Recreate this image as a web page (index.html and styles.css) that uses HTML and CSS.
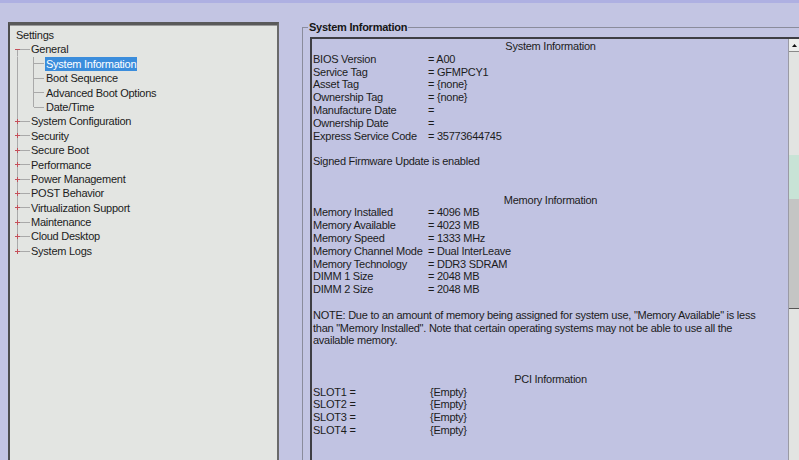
FILE: index.html
```html
<!DOCTYPE html>
<html lang="en">
<head>
  <meta charset="UTF-8">
  <meta name="viewport" content="width=device-width, initial-scale=1.0">
  <title>Settings</title>
  <link rel="stylesheet" href="styles.css">
</head>
<body>
  <div class="strip"></div>
  <div class="page">
    <div class="tree">
      <div class="node root"><span class="label">Settings</span></div>
      <div class="node top first">
        <span class="twig"><svg width="5" height="5" viewBox="0 0 5 5"><path d="M0 2.5H5" stroke="#c4505a" stroke-width="1"/></svg></span>
        <span class="label">General</span>
      </div>
      <div class="node child"><span class="twig"></span><span class="label selected">System Information</span></div>
      <div class="node child"><span class="twig"></span><span class="label">Boot Sequence</span></div>
      <div class="node child"><span class="twig"></span><span class="label">Advanced Boot Options</span></div>
      <div class="node child end"><span class="twig"></span><span class="label">Date/Time</span></div>
      <div class="node top"><span class="twig"><svg width="5" height="5" viewBox="0 0 5 5"><path d="M0 2.5H5M2.5 0V5" stroke="#c4505a" stroke-width="1"/></svg></span><span class="label">System Configuration</span></div>
      <div class="node top"><span class="twig"><svg width="5" height="5" viewBox="0 0 5 5"><path d="M0 2.5H5M2.5 0V5" stroke="#c4505a" stroke-width="1"/></svg></span><span class="label">Security</span></div>
      <div class="node top"><span class="twig"><svg width="5" height="5" viewBox="0 0 5 5"><path d="M0 2.5H5M2.5 0V5" stroke="#c4505a" stroke-width="1"/></svg></span><span class="label">Secure Boot</span></div>
      <div class="node top"><span class="twig"><svg width="5" height="5" viewBox="0 0 5 5"><path d="M0 2.5H5M2.5 0V5" stroke="#c4505a" stroke-width="1"/></svg></span><span class="label">Performance</span></div>
      <div class="node top"><span class="twig"><svg width="5" height="5" viewBox="0 0 5 5"><path d="M0 2.5H5M2.5 0V5" stroke="#c4505a" stroke-width="1"/></svg></span><span class="label">Power Management</span></div>
      <div class="node top"><span class="twig"><svg width="5" height="5" viewBox="0 0 5 5"><path d="M0 2.5H5M2.5 0V5" stroke="#c4505a" stroke-width="1"/></svg></span><span class="label">POST Behavior</span></div>
      <div class="node top"><span class="twig"><svg width="5" height="5" viewBox="0 0 5 5"><path d="M0 2.5H5M2.5 0V5" stroke="#c4505a" stroke-width="1"/></svg></span><span class="label">Virtualization Support</span></div>
      <div class="node top"><span class="twig"><svg width="5" height="5" viewBox="0 0 5 5"><path d="M0 2.5H5M2.5 0V5" stroke="#c4505a" stroke-width="1"/></svg></span><span class="label">Maintenance</span></div>
      <div class="node top"><span class="twig"><svg width="5" height="5" viewBox="0 0 5 5"><path d="M0 2.5H5M2.5 0V5" stroke="#c4505a" stroke-width="1"/></svg></span><span class="label">Cloud Desktop</span></div>
      <div class="node top last"><span class="twig"><svg width="5" height="5" viewBox="0 0 5 5"><path d="M0 2.5H5M2.5 0V5" stroke="#c4505a" stroke-width="1"/></svg></span><span class="label">System Logs</span></div>
    </div>

    <fieldset class="group">
      <legend>System Information</legend>
      <div class="frame">
        <div class="info">
          <div class="heading">System Information</div>
          <div class="pair"><span class="key">BIOS Version</span><span>= A00</span></div>
          <div class="pair"><span class="key">Service Tag</span><span>= GFMPCY1</span></div>
          <div class="pair"><span class="key">Asset Tag</span><span>= {none}</span></div>
          <div class="pair"><span class="key">Ownership Tag</span><span>= {none}</span></div>
          <div class="pair"><span class="key">Manufacture Date</span><span>=</span></div>
          <div class="pair"><span class="key">Ownership Date</span><span>=</span></div>
          <div class="pair"><span class="key">Express Service Code</span><span>= 35773644745</span></div>
          <div class="blank"></div>
          <div>Signed Firmware Update is enabled</div>
          <div class="blank"></div>
          <div class="blank"></div>
          <div class="heading">Memory Information</div>
          <div class="pair"><span class="key">Memory Installed</span><span>= 4096 MB</span></div>
          <div class="pair"><span class="key">Memory Available</span><span>= 4023 MB</span></div>
          <div class="pair"><span class="key">Memory Speed</span><span>= 1333 MHz</span></div>
          <div class="pair"><span class="key">Memory Channel Mode</span><span>= Dual InterLeave</span></div>
          <div class="pair"><span class="key">Memory Technology</span><span>= DDR3 SDRAM</span></div>
          <div class="pair"><span class="key">DIMM 1 Size</span><span>= 2048 MB</span></div>
          <div class="pair"><span class="key">DIMM 2 Size</span><span>= 2048 MB</span></div>
          <div class="blank"></div>
          <div>NOTE: Due to an amount of memory being assigned for system use, "Memory Available" is less<br>than "Memory Installed". Note that certain operating systems may not be able to use all the<br>available memory.</div>
          <div class="blank"></div>
          <div class="blank"></div>
          <div class="heading">PCI Information</div>
          <div class="pair slot"><span class="key">SLOT1 =</span><span>{Empty}</span></div>
          <div class="pair slot"><span class="key">SLOT2 =</span><span>{Empty}</span></div>
          <div class="pair slot"><span class="key">SLOT3 =</span><span>{Empty}</span></div>
          <div class="pair slot"><span class="key">SLOT4 =</span><span>{Empty}</span></div>
        </div>
        <div class="scrollbar">
          <div class="arrow"><svg width="5" height="3" viewBox="0 0 5 3"><path d="M0 3L2.5 0L5 3Z" fill="#111"/></svg></div>
          <div class="thumb"></div>
        </div>
      </div>
    </fieldset>
  </div>
</body>
</html>
```

FILE: styles.css
```css
html, body {
  margin: 0;
  height: 100%;
  overflow: hidden;
}
body {
  background: #c3c5e3;
  font-family: "Liberation Sans", Arial, sans-serif;
  font-size: 11px;
  letter-spacing: -0.25px;
  color: #1c1c1c;
}
.strip {
  height: 3px;
  background: #aeb0e2;
}
.page {
  display: flex;
  align-items: flex-start;
}

/* left navigation tree */
.tree {
  margin: 19px 0 0 8px;
  width: 267px;
  height: 432px;
  padding-top: 3px;
  background: #e3e5e2;
  border-top: 3px solid #5a5a5a;
  border-left: 2px solid #4e4e4e;
  border-right: 2px solid #6a6a6a;
  box-shadow: inset 0 1px 0 #9a9a9a;
}
.node {
  display: flex;
  height: 14.4px;
  line-height: 14.4px;
  white-space: nowrap;
}
.label {
  padding: 0 1px;
}
.root .label {
  padding-left: 6px;
}
.selected {
  background: #3b8ddc;
  color: #fff;
}
.twig {
  display: flex;
  align-items: center;
  padding-left: 5px;
  box-sizing: border-box;
}
.top .twig {
  width: 20px;
  background:
    linear-gradient(#a9a9a9, #a9a9a9) 7px 0 / 1px 100% no-repeat,
    linear-gradient(#a9a9a9, #a9a9a9) 10px 50% / 10px 1px no-repeat;
}
.top.first .twig {
  background:
    linear-gradient(#a9a9a9, #a9a9a9) 7px 100% / 1px 50% no-repeat,
    linear-gradient(#a9a9a9, #a9a9a9) 10px 50% / 10px 1px no-repeat;
}
.top.last .twig {
  background:
    linear-gradient(#a9a9a9, #a9a9a9) 7px 0 / 1px 50% no-repeat,
    linear-gradient(#a9a9a9, #a9a9a9) 10px 50% / 10px 1px no-repeat;
}
.child .twig {
  width: 35px;
  background:
    linear-gradient(#a9a9a9, #a9a9a9) 7px 0 / 1px 100% no-repeat,
    linear-gradient(#a9a9a9, #a9a9a9) 23px 0 / 1px 100% no-repeat,
    linear-gradient(#a9a9a9, #a9a9a9) 24px 50% / 10px 1px no-repeat;
}
.child.end .twig {
  background:
    linear-gradient(#a9a9a9, #a9a9a9) 7px 0 / 1px 100% no-repeat,
    linear-gradient(#a9a9a9, #a9a9a9) 23px 0 / 1px 50% no-repeat,
    linear-gradient(#a9a9a9, #a9a9a9) 24px 50% / 10px 1px no-repeat;
}

/* right information group */
.group {
  flex: 1;
  margin: 17px 0 0 23px;
  padding: 3px 0 0 7px;
  border: 1px solid #8a8c9c;
  border-right: none;
  border-bottom: none;
  min-width: 0;
}
.group legend {
  margin-left: -2px;
  padding: 0 1px;
  line-height: 14px;
  font-weight: bold;
  color: #151515;
}
.frame {
  display: flex;
  height: 421px;
  background: #c1c3e2;
  border-top: 2px solid #3e3e44;
  border-left: 2px solid #3e3e44;
}
.info {
  flex: 1;
  padding: 1px 0 0 1px;
  line-height: 12.8px;
  white-space: nowrap;
  overflow: hidden;
}
.heading {
  text-align: center;
}
.pair {
  display: flex;
}
.key {
  width: 115px;
}
.slot .key {
  width: 117px;
}
.blank {
  height: 12.8px;
}

.scrollbar {
  width: 10px;
  background: #e2e4e2;
  border-left: 1px solid #9a9aa4;
}
.arrow {
  height: 12px;
  display: flex;
  align-items: center;
  justify-content: center;
  background: #eceeec;
  border-bottom: 1px solid #8a8a8a;
}
.thumb {
  margin-top: 103px;
  height: 153px;
  background: linear-gradient(#c8e3d6 0, #c8e3d6 44px, #c4c5c4 44px);
  border-bottom: 1px solid #555;
}
```
